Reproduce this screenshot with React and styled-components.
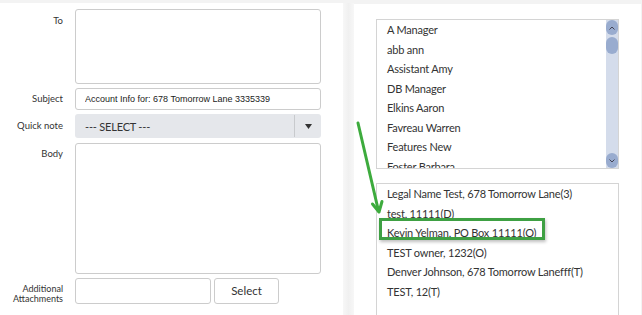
import React from 'react'
import styled, {createGlobalStyle} from 'styled-components'

const GlobalStyle = createGlobalStyle`
  html, body {
    margin: 0;
    padding: 0;
    background: #f3f3f3;
  }
  * { box-sizing: border-box; }
`

const font = `Lato, "Noto Sans", sans-serif`

const contacts = [
  'A Manager',
  'abb ann',
  'Assistant Amy',
  'DB Manager',
  'Elkins Aaron',
  'Favreau Warren',
  'Features New',
  'Foster Barbara',
]

const picked = [
  'Legal Name Test, 678 Tomorrow Lane(3)',
  'test, 11111(D)',
  'Kevin Yelman, PO Box 11111(O)',
  'TEST owner, 1232(O)',
  'Denver Johnson, 678 Tomorrow Lanefff(T)',
  'TEST, 12(T)',
]

export default function App() {
  return (
    <Page>
      <GlobalStyle />
      <LeftPanel>
        <Row>
          <Label $top={6}>To</Label>
          <TextArea $h={75} />
        </Row>
        <Row $center>
          <Label>Subject</Label>
          <Input defaultValue="Account Info for: 678 Tomorrow Lane 3335339" />
        </Row>
        <Row $center>
          <Label>Quick note</Label>
          <Select>
            <SelectText>--- SELECT ---</SelectText>
            <SelectArrow>
              <svg width="7" height="5" viewBox="0 0 7 5">
                <path d="M0 0h7L3.5 5z" fill="#333" />
              </svg>
            </SelectArrow>
          </Select>
        </Row>
        <Row $gap={1}>
          <Label $top={5}>Body</Label>
          <TextArea $h={131} />
        </Row>
        <Row $center>
          <Label $small $top={5}>Additional<br />Attachments</Label>
          <AttachInput />
          <Button>Select</Button>
        </Row>
      </LeftPanel>
      <Divider />
      <RightPanel>
        <ListBox $h={150}>
          <Items>
            {contacts.map(c => <Item key={c}>{c}</Item>)}
          </Items>
          <ScrollTrack>
            <ScrollBtn>
              <svg width="6" height="4" viewBox="0 0 6 4"><path d="M0.5 3.5L3 1l2.5 2.5" stroke="#445" fill="none" /></svg>
            </ScrollBtn>
            <Thumb />
            <Spacer />
            <ScrollBtn>
              <svg width="6" height="4" viewBox="0 0 6 4"><path d="M0.5 0.5L3 3l2.5-2.5" stroke="#445" fill="none" /></svg>
            </ScrollBtn>
          </ScrollTrack>
        </ListBox>
        <ListBox $open>
          <Items>
            {picked.map(c => <Item key={c}>{c}</Item>)}
          </Items>
        </ListBox>
        <Highlight />
      </RightPanel>
      <Arrow width="32" height="100" viewBox="0 0 32 100">
        <path d="M2 3 L22.5 91" stroke="#3dab3d" strokeWidth="3" strokeLinecap="round" fill="none" />
        <path d="M16.5 84 L23 92 L26 81.5" stroke="#3dab3d" strokeWidth="3" strokeLinecap="round" strokeLinejoin="round" fill="none" />
      </Arrow>
    </Page>
  )
}

const Page = styled.div`
  position: relative;
  display: flex;
  width: 642px;
  height: 315px;
  padding-top: 3px;
  overflow: hidden;
  font-family: ${font};
  color: #333;
`

const LeftPanel = styled.div`
  width: 343px;
  background: #fff;
  padding: 6px 0 0 0;
  display: flex;
  flex-direction: column;
  gap: 4px;
`

const Divider = styled.div`
  width: 11px;
  background: linear-gradient(90deg, #f7f7f7, #f0f0f0 50%, #f7f7f7);
`

const Row = styled.div`
  display: flex;
  align-items: ${p => (p.$center ? 'center' : 'flex-start')};
  margin-top: ${p => p.$gap || 0}px;
`

const Label = styled.div`
  width: 63px;
  margin-right: 12px;
  text-align: right;
  white-space: nowrap;
  font-size: ${p => (p.$small ? '9px' : '9.5px')};
  line-height: ${p => (p.$small ? '10px' : '12px')};
  padding-top: ${p => p.$top || 0}px;
  color: #333;
`

const TextArea = styled.div`
  width: 246px;
  height: ${p => p.$h}px;
  border: 1px solid #ccc;
  border-radius: 3px;
  background: #fff;
`

const Input = styled.input`
  width: 246px;
  height: 22px;
  border: 1px solid #ccc;
  border-radius: 3px;
  padding: 0 0 0 9px;
  font-family: "Liberation Sans", Arial, sans-serif;
  font-size: 9px;
  color: #222;
  outline: none;
`

const Select = styled.div`
  width: 246px;
  height: 24px;
  display: flex;
  align-items: center;
  background: #e5e7eb;
  border-radius: 3px;
`

const SelectText = styled.div`
  flex: 1;
  padding-left: 10px;
  font-size: 11px;
  letter-spacing: -0.2px;
  color: #333;
`

const SelectArrow = styled.div`
  width: 27px;
  height: 22px;
  border-left: 1px solid #c8cacd;
  display: flex;
  align-items: center;
  justify-content: center;
`

const AttachInput = styled.div`
  width: 136px;
  height: 26px;
  border: 1px solid #ccc;
  border-radius: 3px;
`

const Button = styled.div`
  width: 65px;
  height: 26px;
  margin-left: 3px;
  border: 1px solid #ccc;
  border-radius: 3px;
  display: flex;
  align-items: center;
  justify-content: center;
  padding-bottom: 2px;
  font-size: 11.5px;
  color: #333;
`

const RightPanel = styled.div`
  position: relative;
  flex: 1;
  margin-top: 1px;
  margin-right: 1px;
  background: #fff;
  padding: 15px 0 0 22px;
  display: flex;
  flex-direction: column;
  gap: 14px;
`

const ListBox = styled.div`
  width: 243px;
  height: ${p => (p.$h ? p.$h + 'px' : 'auto')};
  flex: ${p => (p.$open ? 1 : 'none')};
  border: 1px solid #d4d4d4;
  ${p => p.$open && 'border-bottom: none;'}
  display: flex;
  overflow: hidden;
`

const Items = styled.div`
  flex: 1;
  padding-left: 10px;
`

const Item = styled.div`
  height: 19.5px;
  line-height: 19.5px;
  font-size: 11px;
  letter-spacing: -0.2px;
  color: #333;
  white-space: nowrap;
`

const ScrollTrack = styled.div`
  width: 12px;
  background: #d4dceb;
  display: flex;
  flex-direction: column;
  align-items: center;
`

const ScrollBtn = styled.div`
  width: 12px;
  height: 15px;
  border-radius: 6px;
  background: #99accf;
  display: flex;
  align-items: center;
  justify-content: center;
`

const Thumb = styled.div`
  width: 12px;
  height: 17px;
  margin-top: 2px;
  border-radius: 6px;
  background: #99accf;
`

const Spacer = styled.div`
  flex: 1;
`

const Highlight = styled.div`
  position: absolute;
  left: 25px;
  top: 214px;
  width: 166px;
  height: 22px;
  border: 3px solid #3ea043;
  box-shadow: 1px 2px 3px rgba(0, 0, 0, 0.25);
`

const Arrow = styled.svg`
  position: absolute;
  left: 356px;
  top: 120px;
`
